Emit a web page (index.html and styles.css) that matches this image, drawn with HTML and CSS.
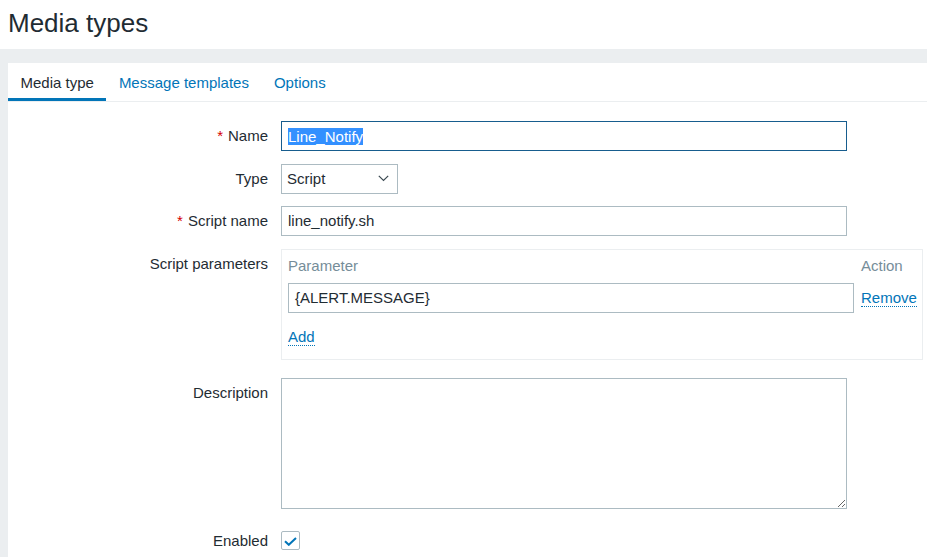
FILE: index.html
```html
<!DOCTYPE html>
<html lang="en">
<head>
<meta charset="utf-8">
<title>Media types</title>
<link rel="stylesheet" href="styles.css">
</head>
<body>
<header class="page-header">
  <h1 class="page-title">Media types</h1>
</header>
<main class="page-body">
  <section class="panel">
    <nav class="tabs">
      <a class="tab tab-active">Media type</a>
      <a class="tab">Message templates</a>
      <a class="tab">Options</a>
    </nav>
    <div class="form">
      <label class="label"><span class="req">*</span>Name</label>
      <div class="field"><div class="input input-focus"><span class="sel">Line_Notify</span></div></div>

      <label class="label">Type</label>
      <div class="field">
        <div class="select">
          <span>Script</span>
          <svg class="chev" width="11" height="7" viewBox="0 0 11 7"><polyline points="0.8,0.8 5.5,5.5 10.2,0.8" fill="none" stroke="#3b4a52" stroke-width="1.2"/></svg>
        </div>
      </div>

      <label class="label"><span class="req">*</span>Script name</label>
      <div class="field"><div class="input">line_notify.sh</div></div>

      <label class="label">Script parameters</label>
      <div class="field field-params">
        <div class="params">
          <div class="params-head">Parameter</div>
          <div class="params-head">Action</div>
          <div class="input param-input">{ALERT.MESSAGE}</div>
          <div class="params-action"><a class="link">Remove</a></div>
          <div class="params-add"><a class="link">Add</a></div>
        </div>
      </div>

      <label class="label">Description</label>
      <div class="field"><textarea class="textarea"></textarea></div>

      <label class="label label-enabled">Enabled</label>
      <div class="field field-enabled">
        <span class="checkbox">
          <svg width="13" height="9" viewBox="0 0 13 9"><polyline points="1,4.2 4.8,7.8 12,1" fill="none" stroke="#0275b8" stroke-width="2"/></svg>
        </span>
      </div>
    </div>
  </section>
</main>
</body>
</html>
```
FILE: styles.css
```css
html, body {
  margin: 0;
  padding: 0;
}
body {
  background: #ebeef0;
  font-family: "Liberation Sans", Arial, sans-serif;
  font-size: 15px;
  color: #1f2c33;
  overflow: hidden;
  height: 557px;
}
.page-header {
  background: #ffffff;
  height: 49px;
  box-sizing: border-box;
  padding: 8px 8px 0 8px;
}
.page-title {
  margin: 0;
  font-size: 26px;
  font-weight: normal;
  line-height: 30px;
  color: #1f2c33;
}
.page-body {
  padding: 14px 0 0 8px;
}
.panel {
  background: #ffffff;
  min-height: 520px;
}
.tabs {
  display: flex;
  padding-top: 8px;
  border-bottom: 1px solid #ebeef0;
}
.tab {
  display: block;
  padding: 0 12.5px 3px 12.5px;
  line-height: 24px;
  border-bottom: 3px solid transparent;
  color: #0275b8;
  cursor: pointer;
}
.tab-active {
  color: #1f2c33;
  border-bottom-color: #0275b8;
}
.form {
  display: grid;
  grid-template-columns: 260px 1fr;
  column-gap: 13px;
  row-gap: 12.5px;
  padding-top: 19px;
}
.label {
  text-align: right;
  line-height: 30px;
  color: #1f2c33;
}
.req {
  color: #d40000;
  margin-right: 5px;
}
.field {
  display: flex;
  align-items: flex-start;
}
.input {
  width: 566px;
  height: 30px;
  box-sizing: border-box;
  border: 1px solid #acbbc2;
  padding: 0 6px;
  line-height: 28px;
  color: #1f2c33;
  background: #ffffff;
  white-space: nowrap;
}
.input-focus {
  border-color: #175d8e;
}
.sel {
  background: #3390ff;
  color: #ffffff;
  display: inline-block;
  line-height: 17px;
  vertical-align: middle;
  position: relative;
  top: -1px;
}
.select {
  width: 117px;
  height: 30px;
  box-sizing: border-box;
  border: 1px solid #acbbc2;
  padding: 0 8px 0 5px;
  display: flex;
  align-items: center;
  justify-content: space-between;
  line-height: 28px;
}
.chev {
  display: block;
}
.field-params {
  margin-bottom: 5.5px;
}
.params {
  width: 642px;
  box-sizing: border-box;
  border: 1px solid #ebeef0;
  padding: 4px 5px 13px 6px;
  display: grid;
  grid-template-columns: 566px 1fr;
  column-gap: 7px;
}
.params-head {
  height: 24px;
  line-height: 24px;
  color: #768d99;
  margin-bottom: 5px;
}
.param-input {
  width: 566px;
}
.params-action {
  display: flex;
  align-items: center;
}
.params-add {
  grid-column: 1 / 3;
  margin-top: 15px;
}
.link {
  display: inline-block;
  line-height: 17px;
  color: #0275b8;
  border-bottom: 1px dotted #0275b8;
  cursor: pointer;
}
.textarea {
  display: block;
  width: 566px;
  height: 131px;
  box-sizing: border-box;
  border: 1px solid #acbbc2;
  margin: 0;
  padding: 5px 6px;
  font-family: "Liberation Sans", Arial, sans-serif;
  font-size: 15px;
  background: #ffffff;
  outline: none;
}
.label-enabled {
  margin-top: 4.5px;
}
.field-enabled {
  margin-top: 4.5px;
  height: 30px;
  align-items: center;
}
.checkbox {
  width: 19px;
  height: 19px;
  box-sizing: border-box;
  border: 1px solid #acbbc2;
  border-radius: 2px;
  display: flex;
  align-items: center;
  justify-content: center;
  background: #ffffff;
}
.checkbox svg {
  display: block;
  margin-top: 1px;
}
```
